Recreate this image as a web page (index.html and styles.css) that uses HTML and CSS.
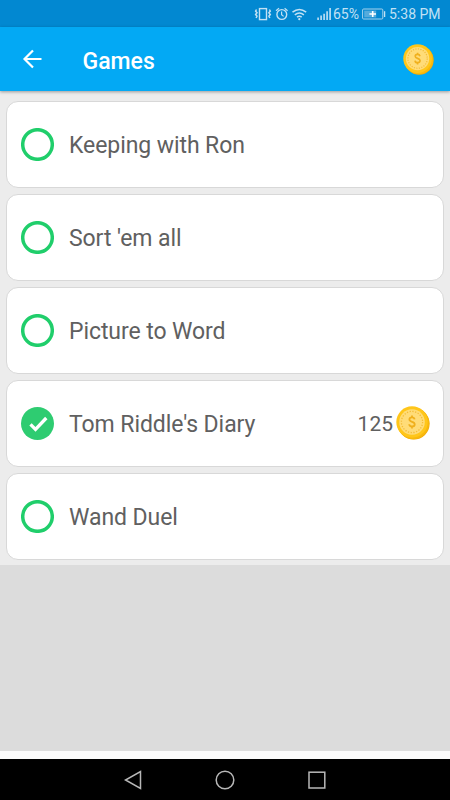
FILE: index.html
```html
<!DOCTYPE html>
<html lang="en">
<head>
<meta charset="utf-8">
<title>Games</title>
<link rel="stylesheet" href="styles.css">
</head>
<body>
<svg class="defs" width="0" height="0">
  <symbol id="coin" viewBox="0 0 34 34">
    <circle cx="17.8" cy="17.8" r="15.8" fill="#f0a808"/>
    <circle cx="17.2" cy="17.2" r="16" fill="#f8b80c"/>
    <circle cx="16" cy="16" r="15.7" fill="#ffc61a"/>
    <circle cx="16" cy="16" r="12.8" fill="#ffdc78"/>
    <circle cx="16" cy="16" r="10.6" fill="none" stroke="#f3bc38" stroke-width="1.3" stroke-dasharray="1.3 1.475"/>
    <path d="M18.6 13.4C18.3 11.9 17.2 11.4 16 11.4c-1.6 0-2.6.9-2.6 2.1 0 3 5.3 1.6 5.3 4.7 0 1.4-1.2 2.3-2.7 2.3-1.6 0-2.7-.8-2.8-2.3M16 9.5v2M16 20.4v2" fill="none" stroke="#f0b01d" stroke-width="1.8"/>
  </symbol>
  <symbol id="ring" viewBox="0 0 33 33">
    <circle cx="16.5" cy="16.5" r="14.8" fill="none" stroke="#20ce6b" stroke-width="3.5"/>
  </symbol>
</svg>
<div class="status">
  <svg class="status-icons" width="78" height="18" viewBox="0 0 78 18" fill="none" stroke="#c2e1f4" stroke-width="1.2">
    <rect x="5.5" y="3.6" width="7" height="11" stroke-width="1.4"/>
    <path d="M2.5 4.5l-.9 1.6 1.4 1.7-1.4 1.7 1.4 1.7-.9 1.8M15.4 4.5l.9 1.6-1.4 1.7 1.4 1.7-1.4 1.7.9 1.8" stroke-width="1.5"/>
    <circle cx="27.8" cy="9.5" r="4.9" stroke-width="1.4"/>
    <path d="M27.6 6.5v3.3l2 1.6M22 5.7l3-2.5M33.6 5.7l-3-2.5"/>
    <path d="M38.5 7.2q6.8-5.6 13.7 0M40.8 9.8q4.6-3.7 9.1 0M43 12.1q2.4-1.8 4.7 0" stroke-width="1.5"/>
    <circle cx="45.3" cy="14.2" r="1.1" fill="#c2e1f4" stroke="none"/>
    <path d="M64.1 15v-2.6M67.1 15v-4.4M70.1 15V8.8M73.1 15V6.2M76.1 15V3" stroke-width="1.6"/>
  </svg>
  <span class="percent">65%</span>
  <svg class="battery" width="24" height="12" viewBox="0 0 24 12">
    <rect x=".6" y="1" width="20.2" height="10" rx="1" fill="none" stroke="#a7d2ec"/>
    <rect x="2.2" y="2.6" width="12" height="6.8" fill="#55abdc"/>
    <path d="M10.7 3v6M7.4 6h6.6" stroke="#fff" stroke-width="1.6"/>
    <path d="M22.6 3.2v5.8" stroke="#c2e1f4" stroke-width="1.3"/>
  </svg>
  <span class="time">5:38 PM</span>
</div>
<header class="appbar">
  <svg class="back" width="20" height="20" viewBox="0 0 20 20" fill="none" stroke="#fff" stroke-width="2.2"><path d="M19.5 10H2.5M11 1.5L2.5 10l8.5 8.5"/></svg>
  <h1 class="title">Games</h1>
  <svg class="bar-coin" width="31" height="31"><use href="#coin"/></svg>
</header>
<main class="content">
  <ul class="list">
    <li class="card"><svg class="mark" width="33" height="33"><use href="#ring"/></svg><span class="label">Keeping with Ron</span></li>
    <li class="card"><svg class="mark" width="33" height="33"><use href="#ring"/></svg><span class="label">Sort 'em all</span></li>
    <li class="card"><svg class="mark" width="33" height="33"><use href="#ring"/></svg><span class="label">Picture to Word</span></li>
    <li class="card">
      <svg class="mark" width="33" height="33" viewBox="0 0 33 33"><circle cx="16.5" cy="16.5" r="16.5" fill="#2ecc71"/><path d="M9.5 17.4l5 5L25.3 11" fill="none" stroke="#fff" stroke-width="3.3"/></svg>
      <span class="label">Tom Riddle's Diary</span>
      <span class="price">125</span>
      <svg class="coin" width="34" height="34"><use href="#coin"/></svg>
    </li>
    <li class="card"><svg class="mark" width="33" height="33"><use href="#ring"/></svg><span class="label">Wand Duel</span></li>
  </ul>
</main>
<div class="footer-strip"></div>
<nav class="navbar">
  <svg width="20" height="20" viewBox="0 0 20 20"><path d="M17.5 1.5v17L2.5 10z"/></svg>
  <svg width="20" height="20" viewBox="0 0 20 20"><circle cx="10" cy="10" r="8.8"/></svg>
  <svg width="20" height="20" viewBox="0 0 20 20"><rect x="2" y="2.2" width="15.8" height="15.8"/></svg>
</nav>
</body>
</html>
```

FILE: styles.css
```css
* { box-sizing: border-box; }
body {
  margin: 0;
  height: 800px;
  display: flex;
  flex-direction: column;
  overflow: hidden;
  font-family: Roboto, "Liberation Sans", sans-serif;
  background: #fafafa;
}
.defs { position: absolute; }
svg { display: block; flex: none; }
.status {
  height: 27px;
  flex: none;
  display: flex;
  align-items: center;
  padding-left: 254px;
  background: #0288d1;
  color: #c2e1f4;
  font-size: 14px;
  line-height: 27px;
  white-space: nowrap;
}
.percent { width: 29px; margin-left: 1px; padding-top: 1px; }
.battery { margin-right: 3px; }
.time { padding-top: 2px; }
.appbar {
  height: 64px;
  flex: none;
  display: flex;
  align-items: center;
  padding: 0 16px 0 22px;
  background: #03a9f4;
  box-shadow: 0 1px 3px rgba(0, 0, 0, .35);
  z-index: 1;
}
.title {
  margin: 6px auto 0 40.5px;
  color: #fff;
  font-size: 23px;
  font-weight: 500;
  line-height: 30px;
}
.content { height: 660px; flex: none; background: #dcdcdc; }
.list {
  margin: 0;
  padding: 10px 6px 6px;
  height: 474px;
  display: flex;
  flex-direction: column;
  gap: 6px;
  list-style: none;
  background: #ececec;
}
.card {
  height: 87px;
  flex: none;
  display: flex;
  align-items: center;
  padding: 0 13px 0 14px;
  border: 1px solid #d8d8d8;
  border-radius: 12px;
  background: #fff;
  color: #606060;
}
.mark { margin-top: -1px; }
.coin { margin-top: -1px; }
.label {
  margin: 3px auto 0 15px;
  font-size: 23px;
  letter-spacing: -.08px;
  line-height: 30px;
  white-space: nowrap;
}
.price { margin: 1px 3px 0 0; font-size: 21px; line-height: 28px; }
.footer-strip { height: 8px; flex: none; background: #fafafa; }
.navbar {
  height: 41px;
  flex: none;
  display: flex;
  align-items: center;
  justify-content: center;
  gap: 72px;
  background: #000;
}
.navbar svg { fill: none; stroke: #b8b8b8; stroke-width: 1.5; }
```
